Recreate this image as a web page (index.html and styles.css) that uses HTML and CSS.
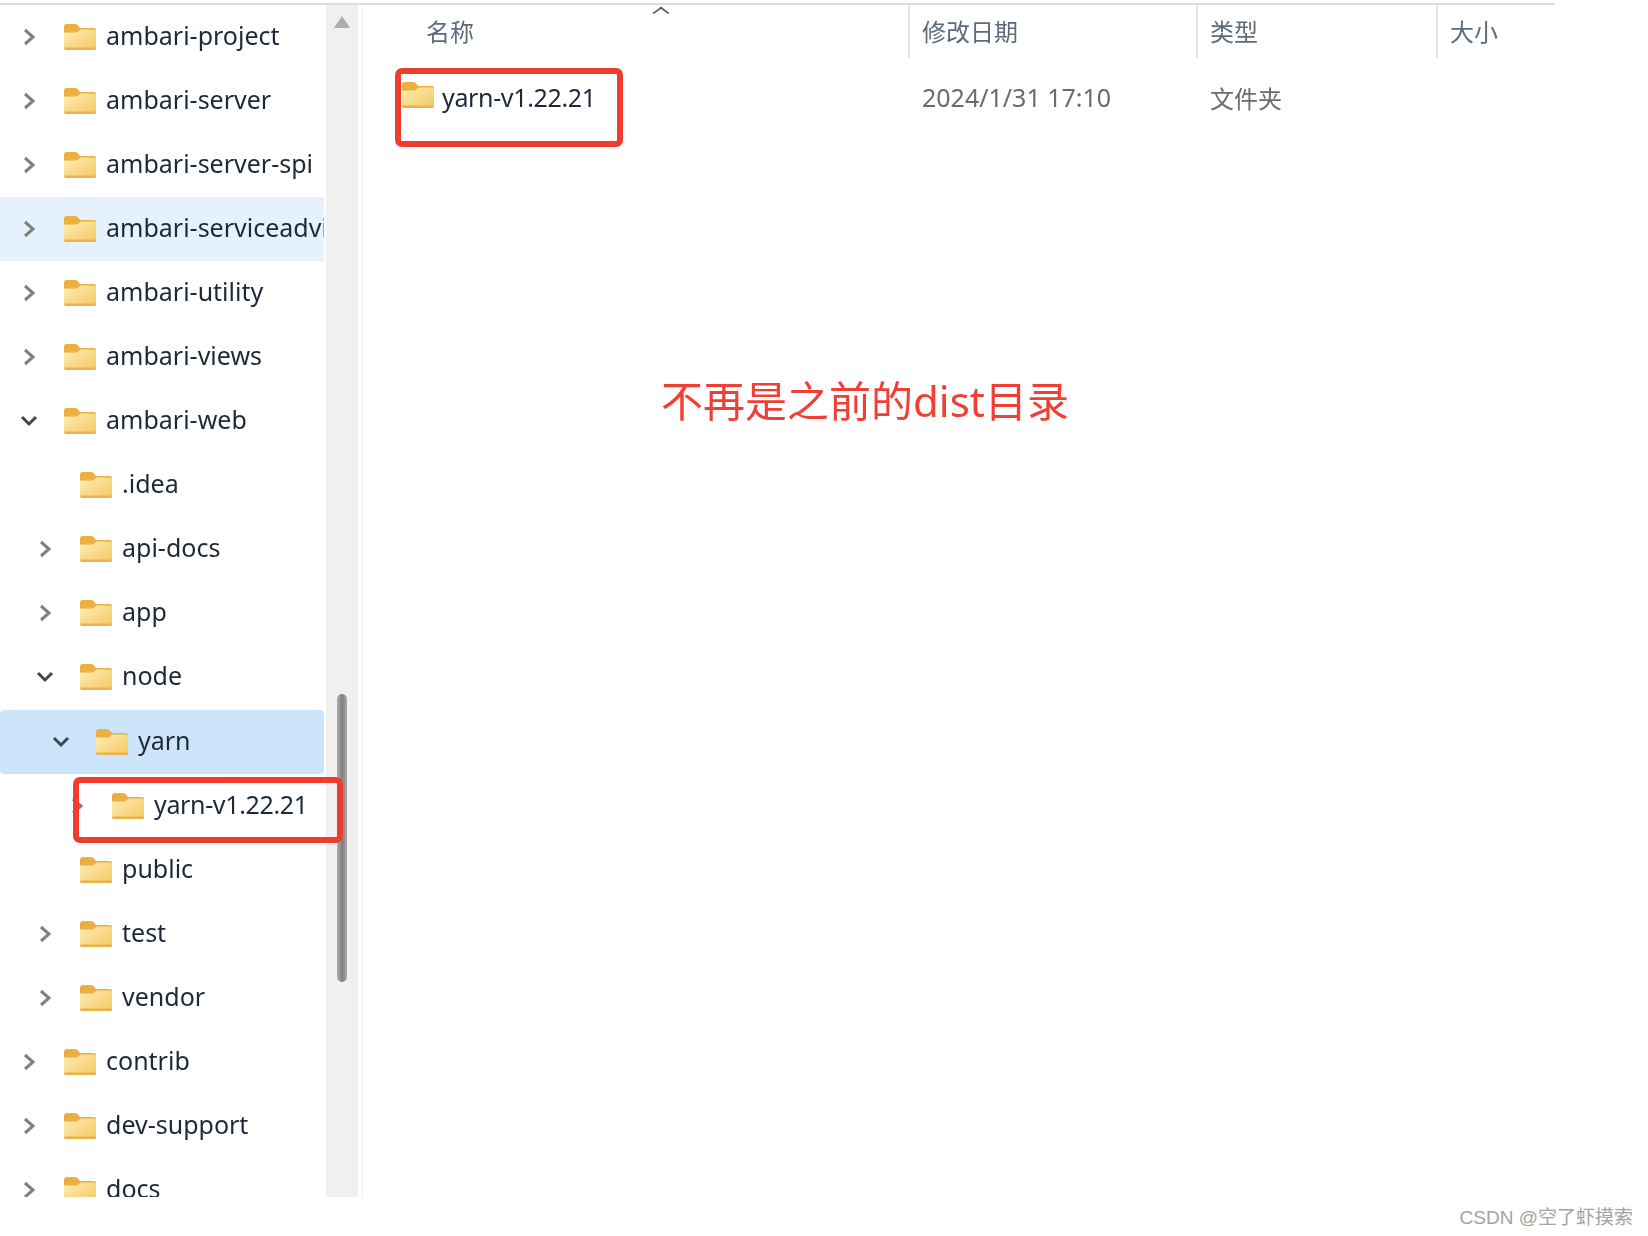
FILE: index.html
```html
<!DOCTYPE html>
<html lang="zh-CN">
<head>
  <meta charset="UTF-8">
  <meta name="viewport" content="width=device-width, initial-scale=1.0">
  <title>文件资源管理器</title>
  <link rel="stylesheet" href="styles.css">
</head>
<body>

  <!-- shared icons -->
  <svg class="icon-defs" aria-hidden="true">
    <defs>
      <linearGradient id="folder_body" x1="0" y1="0" x2="1" y2="1">
        <stop offset="0" stop-color="#fdeeb4"/>
        <stop offset="1" stop-color="#f4c863"/>
      </linearGradient>
      <symbol id="folder" viewBox="0 0 32 26">
        <path d="M0 3 Q0 0 3 0 H11 Q13 0 14.500 2 L16 4 H30 Q32 4 32 6 V12 H0 Z" fill="#ecb03e"/>
        <path d="M0 8.500 H13 L16.500 5.500 H30 Q32 5.500 32 7.500 V24 Q32 26 30 26 H2 Q0 26 0 24 Z" fill="url(#folder_body)"/>
        <path d="M0 24 Q0 26 2 26 H30 Q32 26 32 24 V23.600 H0 Z" fill="#e8b44c"/>
      </symbol>
      <symbol id="chev_right" viewBox="0 0 14 18">
        <path d="M3 2 L11 9 L3 16" fill="none" stroke="currentColor" stroke-width="3"/>
      </symbol>
      <symbol id="chev_down" viewBox="0 0 18 14">
        <path d="M2 3 L9 10 L16 3" fill="none" stroke="currentColor" stroke-width="3"/>
      </symbol>
    </defs>
  </svg>

  <div class="window">
    <div class="tree-pane">
      <div class="tree">
        <div class="row lvl-0"><svg class="chev"><use href="#chev_right"/></svg><svg class="folder"><use href="#folder"/></svg><span class="name">ambari-project</span></div>
        <div class="row lvl-0"><svg class="chev"><use href="#chev_right"/></svg><svg class="folder"><use href="#folder"/></svg><span class="name">ambari-server</span></div>
        <div class="row lvl-0"><svg class="chev"><use href="#chev_right"/></svg><svg class="folder"><use href="#folder"/></svg><span class="name">ambari-server-spi</span></div>
        <div class="row lvl-0 hovered"><svg class="chev"><use href="#chev_right"/></svg><svg class="folder"><use href="#folder"/></svg><span class="name">ambari-serviceadvisor</span></div>
        <div class="row lvl-0"><svg class="chev"><use href="#chev_right"/></svg><svg class="folder"><use href="#folder"/></svg><span class="name">ambari-utility</span></div>
        <div class="row lvl-0"><svg class="chev"><use href="#chev_right"/></svg><svg class="folder"><use href="#folder"/></svg><span class="name">ambari-views</span></div>
        <div class="row lvl-0"><svg class="chev open"><use href="#chev_down"/></svg><svg class="folder"><use href="#folder"/></svg><span class="name">ambari-web</span></div>
        <div class="row lvl-1"><span class="chev"></span><svg class="folder"><use href="#folder"/></svg><span class="name">.idea</span></div>
        <div class="row lvl-1"><svg class="chev"><use href="#chev_right"/></svg><svg class="folder"><use href="#folder"/></svg><span class="name">api-docs</span></div>
        <div class="row lvl-1"><svg class="chev"><use href="#chev_right"/></svg><svg class="folder"><use href="#folder"/></svg><span class="name">app</span></div>
        <div class="row lvl-1"><svg class="chev open"><use href="#chev_down"/></svg><svg class="folder"><use href="#folder"/></svg><span class="name">node</span></div>
        <div class="row lvl-2 selected"><svg class="chev open"><use href="#chev_down"/></svg><svg class="folder"><use href="#folder"/></svg><span class="name">yarn</span></div>
        <div class="row lvl-3"><svg class="chev"><use href="#chev_right"/></svg><svg class="folder"><use href="#folder"/></svg><span class="name version">yarn-v1.22.21</span></div>
        <div class="row lvl-1"><span class="chev"></span><svg class="folder"><use href="#folder"/></svg><span class="name">public</span></div>
        <div class="row lvl-1"><svg class="chev"><use href="#chev_right"/></svg><svg class="folder"><use href="#folder"/></svg><span class="name">test</span></div>
        <div class="row lvl-1"><svg class="chev"><use href="#chev_right"/></svg><svg class="folder"><use href="#folder"/></svg><span class="name">vendor</span></div>
        <div class="row lvl-0"><svg class="chev"><use href="#chev_right"/></svg><svg class="folder"><use href="#folder"/></svg><span class="name">contrib</span></div>
        <div class="row lvl-0"><svg class="chev"><use href="#chev_right"/></svg><svg class="folder"><use href="#folder"/></svg><span class="name">dev-support</span></div>
        <div class="row lvl-0"><svg class="chev"><use href="#chev_right"/></svg><svg class="folder"><use href="#folder"/></svg><span class="name">docs</span></div>
      </div>
      <div class="scrollbar">
        <div class="scroll-arrow"></div>
        <div class="scroll-thumb"></div>
      </div>
      <!-- red annotation around the tree row -->
      <div class="mark mark-tree"></div>
    </div>

    <div class="list-pane">
      <div class="list-head">
        <div class="col col-name">名称<span class="sort-arrow"></span></div>
        <div class="col col-sep">修改日期</div>
        <div class="col col-sep">类型</div>
        <div class="col col-sep">大小</div>
      </div>
      <div class="list-row">
        <div class="cell-name"><svg class="folder"><use href="#folder"/></svg><span class="version">yarn-v1.22.21</span></div>
        <div class="cell cell-date">2024/1/31 17:10</div>
        <div class="cell">文件夹</div>
        <div class="cell"></div>
      </div>
      <!-- annotations drawn on the screenshot -->
      <div class="mark mark-list"></div>
      <div class="note">不再是之前的dist目录</div>
    </div>
  </div>

  <div class="watermark">CSDN @空了虾摸索</div>

</body>
</html>
```

FILE: styles.css
```css
html, body {
  margin: 0;
  height: 100%;
  background: #fff;
  overflow: hidden;
}
body {
  font-family: "Noto Sans", "Noto Sans CJK SC", sans-serif;
  color: #1f2838;
}
.icon-defs {
  width: 0;
  height: 0;
  display: block;
}
.window {
  display: flex;
  width: 1555px;
  height: 1192px;
  margin-top: 3px;
  border-top: 2px solid #d6dfe8;
  filter: blur(0.6px);
}

/* left tree */
.tree-pane {
  position: relative;
  display: flex;
  width: 363px;
  flex: none;
  border-right: 1px solid #eeeeee;
  box-sizing: border-box;
}
.tree {
  width: 324px;
  flex: none;
  overflow: hidden;
}
.row {
  display: flex;
  align-items: center;
  height: 64.05px;
  font-size: 25px;
  white-space: nowrap;
  overflow: hidden;
}
.row.hovered {
  background: #e5f2fe;
}
.row.selected {
  background: #cde5fb;
  border-radius: 4px;
}
.lvl-0 { padding-left: 22px; }
.lvl-1 { padding-left: 38px; }
.lvl-2 { padding-left: 54px; }
.lvl-3 { padding-left: 70px; }
.chev {
  width: 14px;
  height: 18px;
  margin-right: 28px;
  flex: none;
  color: #808080;
}
.chev.open {
  width: 18px;
  height: 14px;
  margin-left: -2px;
  margin-right: 26px;
  color: #3f4752;
}
.folder {
  width: 32px;
  height: 26px;
  margin-right: 10px;
  flex: none;
}
.name {
  padding-bottom: 4px;
}
.version {
  letter-spacing: -0.35px;
}
.scrollbar {
  display: flex;
  flex-direction: column;
  align-items: center;
  width: 32px;
  margin-left: 2px;
  background: #f0f0f0;
}
.scroll-arrow {
  width: 0;
  height: 0;
  margin-top: 11px;
  border-left: 8px solid transparent;
  border-right: 8px solid transparent;
  border-bottom: 12px solid #acacac;
}
.scroll-thumb {
  width: 10px;
  height: 288px;
  margin-top: 666px;
  border-radius: 5px;
  background: linear-gradient(90deg, #b0b0b0, #808080 50%, #a8a8a8);
}

/* right file list */
.list-pane {
  position: relative;
  flex: 1;
}
.list-head,
.list-row {
  display: grid;
  grid-template-columns: 545px 288px 240px 1fr;
}
.list-head {
  height: 53px;
  font-size: 24px;
  color: #5e6b7c;
}
.col {
  position: relative;
  display: flex;
  align-items: center;
  padding-bottom: 2px;
  padding-left: 63px;
}
.col-sep {
  padding-left: 12px;
  border-left: 2px solid #e6e6e6;
}
.sort-arrow {
  position: absolute;
  left: 292px;
  top: 2px;
  width: 10px;
  height: 10px;
  border-left: 2px solid #555;
  border-top: 2px solid #555;
  transform: scale(1, 0.75) rotate(45deg);
}
.list-row {
  align-items: center;
  height: 40px;
  margin-top: 19px;
  font-size: 24px;
  color: #6b6b6b;
}
.cell-name {
  display: flex;
  align-items: center;
  padding-left: 39px;
  font-size: 25px;
  color: #1f2838;
}
.cell-name .folder {
  margin-top: -5px;
  margin-right: 8px;
}
.cell {
  padding-left: 14px;
}
.cell-date {
  font-size: 25px;
}

/* red annotations */
.mark {
  position: absolute;
  box-sizing: border-box;
  border: 6px solid #ee3d2f;
  border-radius: 7px;
}
.mark-tree {
  left: 73px;
  top: 772px;
  width: 270px;
  height: 66px;
}
.mark-list {
  left: 32px;
  top: 63px;
  width: 228px;
  height: 79px;
}
.note {
  position: absolute;
  left: 298px;
  top: 367px;
  font-size: 42px;
  line-height: 58px;
  color: #ee4035;
  white-space: nowrap;
}

.watermark {
  padding: 7px 15px 0 0;
  text-align: right;
  font-family: "Liberation Sans", "Noto Sans CJK SC", sans-serif;
  font-size: 19px;
  line-height: 28px;
  color: #a3a3a3;
}
```
